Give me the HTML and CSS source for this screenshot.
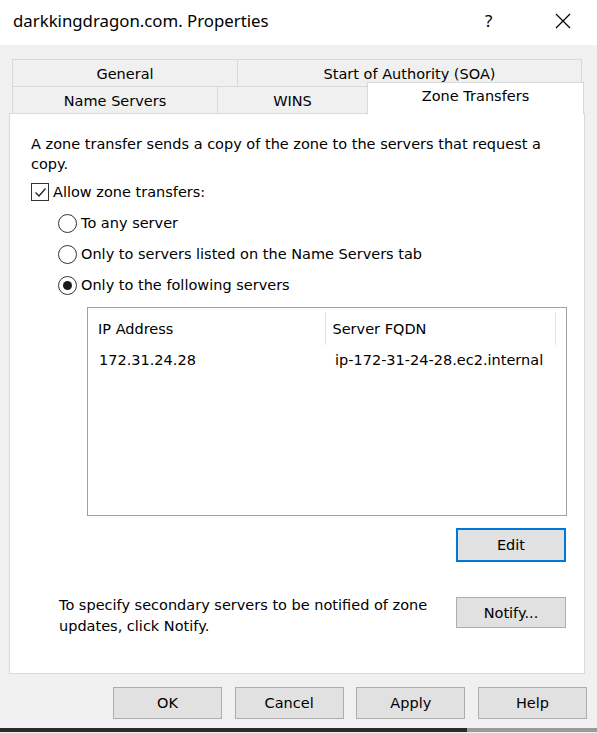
FILE: index.html
```html
<!DOCTYPE html>
<html>
<head>
<meta charset="utf-8">
<link rel="stylesheet" href="styles.css">
</head>
<body>
<div class="titlebar">
  <span class="title">darkkingdragon.com. Properties</span>
  <span class="help">?</span>
  <span class="close"><svg width="16" height="16" viewBox="0 0 16 16"><path d="M1 1 L15 15 M15 1 L1 15" stroke="#000" stroke-width="1.2" fill="none"/></svg></span>
</div>
<div class="dialog">
  <div class="tabs">
    <div class="tabrow">
      <div class="tab t-general">General</div>
      <div class="tab t-soa last">Start of Authority (SOA)</div>
    </div>
    <div class="tabrow">
      <div class="tab t-ns">Name Servers</div>
      <div class="tab t-wins">WINS</div>
      <div class="tab t-zone selected">Zone Transfers</div>
    </div>
  </div>
  <div class="panel">
    <p class="desc">A zone transfer sends a copy of the zone to the servers that request a copy.</p>
    <div class="checkrow">
      <span class="checkbox"><svg width="15" height="15" viewBox="0 0 15 15"><path d="M2.5 7.5 L6 11 L12.5 3.5" stroke="#222" stroke-width="1.3" fill="none"/></svg></span>
      <span>Allow zone transfers:</span>
    </div>
    <div class="radios">
      <div class="radiorow"><span class="radio"></span><span>To any server</span></div>
      <div class="radiorow"><span class="radio"></span><span>Only to servers listed on the Name Servers tab</span></div>
      <div class="radiorow"><span class="radio on"><span class="dot"></span></span><span>Only to the following servers</span></div>
    </div>
    <div class="listbox">
      <div class="lhead">
        <div class="col c1">IP Address</div>
        <div class="col c2">Server FQDN</div>
        <div class="col c3"></div>
      </div>
      <div class="lrow">
        <div class="cell c1">172.31.24.28</div>
        <div class="cell c2">ip-172-31-24-28.ec2.internal</div>
      </div>
    </div>
    <div class="editrow"><button class="btn focus">Edit</button></div>
    <div class="notifyrow">
      <p class="notetext">To specify secondary servers to be notified of zone updates, click Notify.</p>
      <button class="btn">Notify...</button>
    </div>
  </div>
  <div class="buttons">
    <button class="btn bb">OK</button>
    <button class="btn bb">Cancel</button>
    <button class="btn bb">Apply</button>
    <button class="btn bb">Help</button>
  </div>
</div>
<div class="taskbar"><div class="tb-dark"></div><div class="tb-light"></div></div>
</body>
</html>
```
FILE: styles.css
```css
* { box-sizing: border-box; }
html, body { margin: 0; padding: 0; }
body {
  width: 597px;
  height: 733px;
  overflow: hidden;
  background: #f0f0f0;
  font-family: "DejaVu Sans", sans-serif;
  font-size: 14.5px;
  color: #000;
}
.titlebar {
  height: 45px;
  background: #fff;
  display: flex;
  align-items: center;
  padding: 0 0 4px 13px;
}
.title {
  font-family: "Noto Sans", "Open Sans", sans-serif;
  font-size: 16.8px;
  flex: 1;
}
.help {
  font-family: "Noto Sans", sans-serif;
  font-size: 17px;
  width: 20px;
  margin-right: 50px;
}
.close { width: 16px; margin-right: 26px; display: flex; }
.dialog { padding-top: 14px; }
.tabs { margin-left: 12px; }
.tabrow { display: flex; height: 27px; }
.tab {
  height: 27px;
  border-top: 1px solid #d9d9d9;
  border-left: 1px solid #d9d9d9;
  background: #f0f0f0;
  display: flex;
  align-items: center;
  justify-content: center;
  padding-top: 1px;
}
.tab.last { border-right: 1px solid #d9d9d9; }
.t-general { width: 225px; }
.t-soa { width: 345px; }
.t-ns { width: 205px; }
.t-wins { width: 150px; }
.t-zone { width: 217px; }
.tab.selected {
  position: relative;
  background: #fff;
  height: 32px;
  margin-top: -4px;
  border-right: 1px solid #d9d9d9;
  align-items: flex-start;
  padding-top: 5px;
}
.panel {
  margin-left: 9px;
  width: 576px;
  height: 561px;
  background: #fff;
  border: 1px solid #d9d9d9;
  padding: 20px 17px 0 21px;
}
.desc { margin: 0; line-height: 20px; padding-right: 10px; }
.checkrow {
  display: flex;
  align-items: center;
  height: 20px;
  margin-top: 8px;
}
.checkbox {
  width: 18px;
  height: 18px;
  border: 1px solid #333;
  margin-right: 4px;
  display: flex;
  align-items: center;
  justify-content: center;
}
.radios { margin-left: 27px; }
.radiorow {
  display: flex;
  align-items: center;
  height: 20px;
  margin-top: 11px;
}
.radio {
  width: 19px;
  height: 19px;
  border: 1px solid #333;
  border-radius: 50%;
  margin-right: 4px;
  display: flex;
  align-items: center;
  justify-content: center;
}
.dot { width: 9px; height: 9px; border-radius: 50%; background: #1a1a1a; }
.listbox {
  margin: 12px 0 0 56px;
  height: 209px;
  border: 1px solid #a0a0a0;
  background: #fff;
}
.lhead { display: flex; height: 38px; padding-top: 4px; }
.col { display: flex; align-items: center; padding-left: 10px; border-right: 1px solid #e5e5e5; height: 33px; }
.col.c3 { border-right: none; flex: 1; }
.c1 { width: 242px; }
.c2 { width: 233px; }
.lhead .c2 { padding-left: 6px; }
.lrow { display: flex; height: 20px; align-items: center; margin-top: 4px; }
.cell.c1 { padding-left: 11px; }
.cell.c2 { padding-left: 5px; width: auto; }
.editrow { display: flex; justify-content: flex-end; margin-top: 12px; padding-right: 1px; }
.btn {
  font-family: inherit;
  font-size: 14.5px;
  color: #000;
  background: #e1e1e1;
  border: 1px solid #adadad;
  width: 110px;
  height: 32px;
  padding: 0;
  margin: 0;
}
.btn.focus { border: 2px solid #0078d7; height: 34px; }
.notifyrow {
  display: flex;
  justify-content: space-between;
  align-items: flex-start;
  margin-top: 33px;
  padding-right: 1px;
}
.notetext { margin: 0; padding-left: 28px; line-height: 21px; width: 400px; }
.notifyrow .btn { height: 31px; margin-top: 2px; }
.buttons {
  display: flex;
  justify-content: flex-end;
  gap: 12.7px;
  margin-top: 13px;
  padding-right: 10px;
}
.btn.bb { width: 109px; height: 32px; }
.taskbar { display: flex; height: 4px; margin-top: 9px; }
.tb-dark { width: 467px; background: #2b2b2b; }
.tb-light { flex: 1; background: #9a9a9a; }
```
